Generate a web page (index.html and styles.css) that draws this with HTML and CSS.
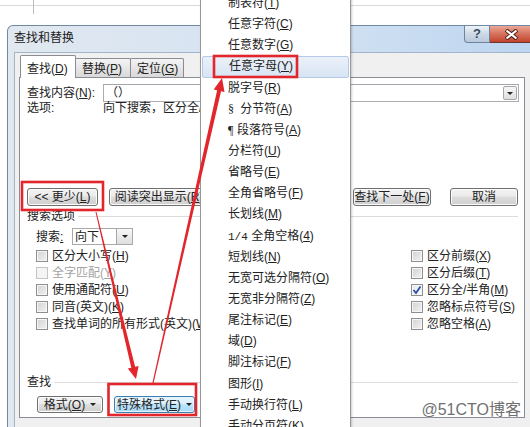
FILE: index.html
```html
<!DOCTYPE html>
<html>
<head>
  <meta charset="utf-8">
  <link rel="stylesheet" href="styles.css">
</head>
<body>

  <div class="dialog">
    <div class="titlebar">
      <span class="title">查找和替换</span>
      <span class="cap-btn help">?</span>
      <span class="cap-btn close">
        <svg width="13" height="11" viewBox="0 0 13 11"><path d="M1 1 L12 10 M12 1 L1 10" stroke="#4a1a12" stroke-width="4"/><path d="M1.5 1.5 L11.5 9.5 M11.5 1.5 L1.5 9.5" stroke="#fff" stroke-width="2.2"/></svg>
      </span>
    </div>

    <div class="client">
      <div class="tabs">
        <span class="tab active">查找(<u>D</u>)</span>
        <span class="tab">替换(<u>P</u>)</span>
        <span class="tab last">定位(<u>G</u>)</span>
      </div>

      <div class="panel">
        <div class="row find-what">
          <span class="lbl">查找内容(<u>N</u>):</span>
          <span class="combo"><span class="combo-text">（）</span><span class="drop"><i class="tri"></i></span></span>
        </div>
        <div class="row options">
          <span class="lbl">选项:</span>
          <span>向下搜索，区分全/半角</span>
        </div>

        <div class="row buttons">
          <span class="btn less"><span>&lt;&lt; 更少(<u>L</u>)</span></span>
          <span class="btn reading"><span>阅读突出显示(<u>R</u>)</span></span>
          <span class="btn next"><span>查找下一处(<u>F</u>)</span></span>
          <span class="btn cancel"><span>取消</span></span>
        </div>

        <div class="group-title">搜索选项</div>

        <div class="row search">
          <span class="lbl">搜索<u>:</u></span>
          <span class="select"><span class="select-text">向下</span><span class="drop"><i class="tri"></i></span></span>
        </div>

        <div class="opts">
          <div class="col">
            <div class="chk"><i class="box"></i><span>区分大小写(<u>H</u>)</span></div>
            <div class="chk off"><i class="box"></i><span>全字匹配(<u>Y</u>)</span></div>
            <div class="chk"><i class="box"></i><span>使用通配符(<u>U</u>)</span></div>
            <div class="chk"><i class="box"></i><span>同音(英文)(<u>K</u>)</span></div>
            <div class="chk"><i class="box"></i><span>查找单词的所有形式(英文)(<u>W</u>)</span></div>
          </div>
          <div class="col right">
            <div class="chk"><i class="box"></i><span>区分前缀(<u>X</u>)</span></div>
            <div class="chk"><i class="box"></i><span>区分后缀(<u>T</u>)</span></div>
            <div class="chk"><i class="box checked"><svg width="10" height="10" viewBox="0 0 10 10"><path d="M1.5 5 L4 8 L8.5 1.5" fill="none" stroke="#2a4f9e" stroke-width="1.8"/></svg></i><span>区分全/半角(<u>M</u>)</span></div>
            <div class="chk"><i class="box"></i><span>忽略标点符号(<u>S</u>)</span></div>
            <div class="chk"><i class="box"></i><span>忽略空格(<u>A</u>)</span></div>
          </div>
        </div>

        <div class="group-title find">查找</div>

        <div class="row bottom-btns">
          <span class="btn format"><span>格式(<u>O</u>)</span><i class="tri"></i></span>
          <span class="btn special"><span>特殊格式(<u>E</u>)</span><i class="tri"></i></span>
        </div>
      </div>
    </div>
  </div>

  <ul class="menu">
    <li>制表符(<u>T</u>)</li>
    <li>任意字符(<u>C</u>)</li>
    <li>任意数字(<u>G</u>)</li>
    <li class="hot">任意字母(<u>Y</u>)</li>
    <li>脱字号(<u>R</u>)</li>
    <li><span class="sym">§</span> 分节符(<u>A</u>)</li>
    <li><span class="sym">¶</span>段落符号(<u>A</u>)</li>
    <li>分栏符(<u>U</u>)</li>
    <li>省略号(<u>E</u>)</li>
    <li>全角省略号(<u>F</u>)</li>
    <li>长划线(<u>M</u>)</li>
    <li><span class="frac">1/4</span> 全角空格(<u>4</u>)</li>
    <li>短划线(<u>N</u>)</li>
    <li>无宽可选分隔符(<u>O</u>)</li>
    <li>无宽非分隔符(<u>Z</u>)</li>
    <li>尾注标记(<u>E</u>)</li>
    <li>域(<u>D</u>)</li>
    <li>脚注标记(<u>F</u>)</li>
    <li>图形(<u>I</u>)</li>
    <li>手动换行符(<u>L</u>)</li>
    <li>手动分页符(<u>K</u>)</li>
  </ul>

  <!-- red annotation marks drawn over the screenshot -->
  <svg class="marks" width="530" height="427" viewBox="0 0 530 427">
    <g fill="none" stroke="#e2262b" stroke-width="2.6">
      <rect x="22" y="182" width="81" height="28"/>
      <rect x="108.5" y="384" width="87.5" height="31"/>
      <rect x="214" y="56" width="83" height="21"/>
    </g>
    <g fill="#e2262b">
      <polygon points="96.5,211.9 135.1,366.8 138.6,366 136,379 127.8,368.6 131.3,367.8 95.5,212.1"/>
      <polygon points="153.6,383.1 221.05,91.14 224.5,91.9 222,78 213.7,89.5 217.15,90.26 152.4,382.9"/>
    </g>
  </svg>

  <div class="watermark">@51CTO博客</div>

</body>
</html>
```

FILE: styles.css
```css
* {
  box-sizing: border-box;
}

body {
  margin: 0;
  width: 530px;
  height: 427px;
  overflow: hidden;
  position: relative;
  font: 12px/14px "Liberation Sans", "Noto Sans CJK SC", sans-serif;
  color: #222;
  /* bits of the document table behind the dialog */
  background:
    linear-gradient(#bdbdbd, #bdbdbd) 33px 0 / 1px 14px no-repeat,
    linear-gradient(#dadada, #dadada) 0 5px / 530px 1px no-repeat,
    #fff;
}

u {
  text-decoration: underline;
}

/* Window frame */
.dialog {
  margin: 25px 0 0 7px;
  width: 533px;
  height: 410px;
  padding: 0 6px;
  border: 1px solid #6f88a3;
  border-bottom: 0;
  border-radius: 6px 6px 0 0;
  background: linear-gradient(to right, #e1e8f0, #d3e2f2 55%, #bcd5f0);
}

.titlebar {
  display: flex;
  height: 26px;
}

.title {
  padding-top: 5px;
  line-height: 14px;
  color: #1a1a1a;
}

.cap-btn {
  display: flex;
  align-items: center;
  justify-content: center;
  height: 17px;
}

.help {
  margin-left: auto;
  width: 26px;
  border: 1px solid #70839a;
  border-top: 0;
  border-radius: 0 0 0 4px;
  background: linear-gradient(#eef3f8, #cdd9e6 50%, #b9c9dc);
  font: bold 13px/16px "Liberation Sans", sans-serif;
  color: #3a4b60;
}

.close {
  width: 43px;
  border: 1px solid #6b3530;
  border-top: 0;
  border-left: 0;
  border-radius: 0 0 4px 0;
  background: linear-gradient(#eaa896, #d5705c 50%, #c2442d);
}

.client {
  height: 390px;
  padding: 2px 0 0 5px;
  border: 1px solid #a3b5c9;
  border-bottom: 0;
  background: #f0f0f0;
}

/* Tabs */
.tabs {
  display: flex;
  align-items: flex-end;
  height: 22px;
}

.tab {
  width: 56px;
  height: 19px;
  margin-left: -1px;
  padding: 3px 0 0 6px;
  border: 1px solid #898c95;
  border-bottom: 0;
  border-radius: 2px 2px 0 0;
  background: linear-gradient(#f4f4f4, #e6e6e6 50%, #d9d9d9);
}

.tab.last {
  width: 54px;
}

.tab.active {
  position: relative;
  z-index: 1;
  height: 23px;
  margin: 0 0 -1px 0;
  padding-top: 6px;
  background: #fff;
}

.panel {
  width: 506px;
  height: 341px;
  margin-left: -1px;
  padding: 6px 5px 0 7px;
  border: 1px solid #898c95;
  background: #fff;
}

.row {
  display: flex;
  align-items: center;
}

.find-what {
  height: 18px;
}

.find-what .lbl,
.options .lbl {
  width: 76px;
}

.combo {
  flex: 1;
  display: flex;
  align-items: center;
  height: 18px;
  border: 1px solid #abadb3;
  border-top-color: #a3a6ad;
}

.combo-text {
  flex: 1;
  padding-left: 2px;
}

.drop {
  display: flex;
  align-items: center;
  justify-content: center;
  width: 14px;
  height: 14px;
  margin-right: 1px;
  border: 1px solid #a7a7a7;
  border-radius: 2px;
  background: linear-gradient(#f7f7f7, #dedede);
}

.tri {
  display: inline-block;
  width: 0;
  height: 0;
  border-left: 3px solid transparent;
  border-right: 3px solid transparent;
  border-top: 3px solid #222;
}

.options {
  height: 13px;
  line-height: 13px;
}

/* Push buttons */
.btn {
  display: flex;
  align-items: center;
  justify-content: center;
  height: 18px;
  border: 1px solid #707070;
  border-radius: 3px;
  background: linear-gradient(#f3f3f3, #ebebeb 45%, #dddddd 50%, #cfcfcf);
  box-shadow: inset 0 0 0 1px #fbfbfb;
  white-space: nowrap;
}

.buttons {
  margin-top: 73px;
}

.less {
  width: 71px;
}

.reading {
  width: 100px;
  margin-left: 11px;
}

.next {
  width: 78px;
  margin-left: auto;
}

.cancel {
  width: 68px;
  margin: 0 1px 0 19px;
}

/* Group captions with a rule after them */
.group-title {
  display: flex;
  align-items: center;
  gap: 3px;
  margin-top: 4px;
  height: 13px;
  line-height: 13px;
}

.group-title::after {
  content: "";
  flex: 1;
  height: 1px;
  margin-right: 1px;
  background: #dcdcdc;
}

.search {
  height: 17px;
  margin-top: 5px;
  padding-left: 9px;
}

.search .lbl {
  width: 36px;
}

.select {
  display: flex;
  align-items: center;
  width: 61px;
  height: 17px;
  border: 1px solid #a9a9a9;
}

.select-text {
  flex: 1;
  padding-left: 2px;
}

.select .drop {
  width: 16px;
  height: 15px;
  margin-right: 0;
  border-radius: 0;
  border-width: 0 0 0 1px;
}

/* Check boxes */
.opts {
  display: flex;
  margin-top: 2px;
  padding-left: 9px;
}

.col {
  flex: 1;
}

.col.right {
  flex: none;
  width: 108px;
}

.chk {
  display: flex;
  align-items: center;
  gap: 4px;
  height: 17px;
  white-space: nowrap;
}

.box {
  display: flex;
  align-items: center;
  justify-content: center;
  width: 12px;
  height: 12px;
  border: 1px solid #8f8f8f;
  background: linear-gradient(135deg, #d2d2d2, #f2f2f2);
  box-shadow: inset 0 0 0 1px #f6f6f6;
}

.box.checked {
  background: linear-gradient(135deg, #e4e9f0, #fafafa);
}

.chk.off {
  color: #a3a3a3;
}

.chk.off .box {
  border-color: #c4c4c4;
  background: #f4f4f4;
}

.group-title.find {
  margin-top: 44px;
}

.bottom-btns {
  margin-top: 7px;
  padding-left: 10px;
  gap: 11px;
}

.bottom-btns .btn {
  height: 17px;
  gap: 5px;
}

.format {
  width: 66px;
}

.special {
  width: 81px;
  border-color: #3c7fb1;
  background: linear-gradient(#eaf6fd, #d9f0fc 45%, #bee6fd 50%, #a7d9f5);
  box-shadow: inset 0 0 0 1px #e5f4fc;
}

/* Special format popup menu */
.menu {
  position: absolute;
  left: 200px;
  top: -8px;
  width: 151px;
  margin: 0;
  padding: 0;
  list-style: none;
  border: 1px solid #979797;
  background: #fff;
  box-shadow: 1px 1px 2px rgba(0, 0, 0, 0.2);
}

.menu li {
  height: 21.15px;
  padding-left: 27px;
  line-height: 21.15px;
  white-space: nowrap;
}

.menu li.hot {
  margin: 0 1px;
  padding-left: 26px;
  line-height: 19.15px;
  border: 1px solid #b4c9e8;
  border-radius: 2px;
  background: linear-gradient(#ebf1f9, #d8e4f4);
}

.sym {
  display: inline-block;
  width: 9px;
  font-family: "Liberation Serif", serif;
}

.frac {
  font-family: "Liberation Mono", monospace;
  font-size: 11px;
}

.marks {
  position: absolute;
  left: 0;
  top: 0;
  pointer-events: none;
}

.watermark {
  position: absolute;
  right: 9px;
  top: 400px;
  font: 16px/20px "Liberation Sans", "Noto Sans CJK SC", sans-serif;
  color: #707070;
  text-shadow: 0 0 2px #fff;
}
```
